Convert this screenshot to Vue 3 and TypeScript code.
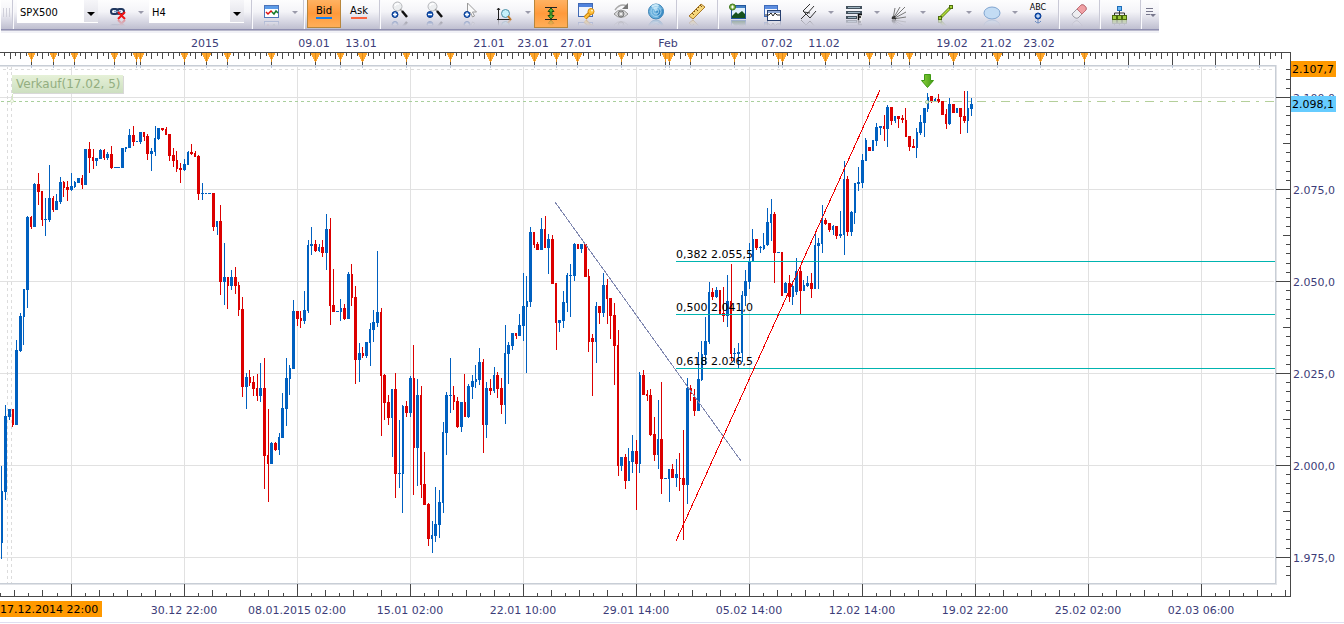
<script setup lang="ts">
import { ref } from 'vue'

type Side = 'C' | 'L' | 'R'
interface Candle {
  up: boolean
  x: number
  high: number
  low: number
  top: number
  bottom: number
  side: Side
}

const symbol = ref('SPX500')
const period = ref('H4')
const priceSide = ref<'Bid' | 'Ask'>('Bid')

// direction+x high low bodyTop bodyBottom [side the body leans to]
const series = `
u1 466 559 491 543 R;u5 405 500 416 492;u9 409 420 409 417;d12 409 427 409 425 R;u16 340 425 350 425
u20 313 352 316 351;u23 289 345 289 317 R;u27 216 308 217 290;d31 216 229 217 227 L;u34 183 227 184 227
d38 173 205 184 192;d42 191 226 191 220 L;u45 198 236 219 220;u49 165 222 198 220;d53 196 212 198 210 L
u56 194 210 201 210;u60 177 204 182 202;d63 181 197 182 188 R;d67 181 201 187 190;u71 173 191 186 190
u74 181 188 182 187 R;u78 178 183 178 183;d82 175 189 178 185 L;u85 149 185 149 185;d89 142 173 149 158
d93 149 169 157 161 L;u96 158 166 158 161;u100 149 159 150 159;d104 149 160 150 158 L;u107 152 160 154 158
d111 146 169 154 168;u115 167 168 167 168;u118 167 168 167 168;u122 148 168 148 168;u125 147 152 147 149 R
u129 129 148 135 148;d133 126 146 135 142;u137 141 142 141 142 L;u140 132 144 132 142;d144 132 141 132 137 L
d147 134 160 136 154;u151 148 171 151 154;u155 126 156 138 152 L;u158 128 140 128 139;d162 128 131 128 130
d166 127 135 129 135 L;d169 134 161 134 156;d173 148 167 155 161;d176 151 172 160 169 R;d180 163 183 168 170
u184 159 171 164 170;u188 151 165 152 165 L;d191 144 155 152 154;d195 151 157 153 157 L;d198 155 200 156 194
u202 183 200 193 194;u206 193 194 193 194 L;u209 193 194 193 194;d213 193 231 193 227;u217 221 235 221 227 L
d220 205 295 221 282;u224 243 305 277 282;d227 277 309 277 286 R;u231 270 290 277 286;d235 267 294 277 286
d238 282 316 285 310 R;d242 297 397 309 387;u246 373 409 377 387;d249 370 386 377 383 R;d253 376 396 382 389
d257 374 401 388 396 L;u260 363 402 388 396;d264 358 489 388 456;d268 409 502 455 464 L;u271 442 464 443 464
d275 442 451 443 450;u279 433 455 437 450 L;u282 393 438 408 438;u286 358 426 378 409;u289 365 395 368 379 R
u293 300 369 311 369;d297 311 326 311 319;d300 311 328 318 321 R;u304 291 324 310 321;u308 240 313 245 311 L
u311 227 255 244 246;d315 240 252 244 251;u319 244 252 247 251 L;d322 240 257 247 253;u326 214 270 229 253
d330 218 325 229 306 L;d333 269 312 305 312;u337 311 312 311 312;u340 299 321 308 312 R;d344 304 320 308 319
u348 272 319 274 319;d351 264 306 274 298 R;d355 286 384 297 360;u359 343 382 353 360;d362 347 358 353 356 R
u366 342 358 342 356;u370 323 366 329 343 L;u373 310 342 322 330;u377 251 327 312 323;d381 308 436 312 376 L
d384 374 420 375 403;d388 395 425 402 418;u392 389 457 389 418 L;d395 373 498 389 474;u399 420 488 473 474
u402 405 513 406 474 R;d406 401 417 406 413;u410 376 417 378 413;d413 345 495 378 448 R;u417 379 486 395 448
d421 386 498 395 485 L;d424 452 505 484 505;d428 503 546 504 539;u432 521 553 535 539 L;u435 487 542 524 536
u439 490 538 502 525;u443 422 513 432 503 L;u446 392 455 395 433;u450 358 413 395 396;d453 386 410 395 402 R
d457 397 428 401 427;u461 402 432 402 427;d464 374 417 402 417 R;u468 384 418 386 417;u472 375 399 381 387
u475 365 388 379 382 R;u479 348 385 362 380;d483 359 453 362 425 L;u486 382 438 388 425;d490 379 395 388 391
u494 367 393 375 391 L;d497 372 398 375 389;d501 378 414 388 405;u505 325 424 353 405 L;u508 342 384 345 354
u512 333 350 333 346;d516 333 339 333 336 L;u519 314 336 325 336;u523 273 341 306 326;u526 276 373 301 307 R
u530 227 307 232 302;d534 232 248 232 245 L;d537 242 250 244 250;u541 218 250 229 250;d545 216 248 229 248 L
u548 234 274 239 248;d552 235 284 239 284;d556 283 350 283 323 L;u559 320 332 320 323;u563 291 328 302 321
u567 273 312 275 303 L;u570 264 317 275 276;u574 243 281 244 276;d577 244 249 244 249 R;u581 244 253 244 249
d585 244 277 244 277;d588 269 352 276 342 R;d592 334 396 338 342;u596 302 363 306 342 L;d599 306 324 306 313
u603 273 317 285 313;d607 279 324 285 299 L;d610 298 339 298 316;d614 303 385 315 346;d618 330 476 345 466 L
u621 457 471 457 466;d625 454 489 457 481;u628 448 481 461 481 R;u632 435 473 451 462;d636 440 510 451 464
u639 372 473 375 464 R;d643 370 395 375 395;d647 390 401 394 396 L;d650 389 436 395 435;d654 417 461 434 455
u658 400 469 439 455 L;d661 382 494 439 479;u665 478 479 478 479;u669 469 502 469 479 L;d672 464 478 469 478
u676 459 487 474 478;d679 453 491 478 479 R;d683 430 540 478 485;u687 378 504 388 485;d690 385 401 388 394 R
d694 389 416 397 411;u698 352 411 379 411;u701 341 381 354 380 R;u705 317 365 341 355;u709 282 344 292 342 L
d712 288 300 292 297;u716 287 298 290 297;d720 290 315 290 314 L;d723 287 322 313 316;u727 275 327 301 316
d731 264 361 301 354 L;u734 348 363 353 354;u738 343 368 352 354;u742 291 362 295 353 L;u745 270 306 281 296
u749 243 289 261 282;u752 229 262 239 261 R;d756 239 250 239 248;u760 246 253 247 248;u763 233 250 245 249 R
u767 208 246 222 245;u771 199 241 214 223 L;d774 212 283 214 253;u778 252 253 252 253;d782 252 296 252 296 L
u785 282 293 283 293;d789 275 302 283 297;u792 281 305 286 297 R;u796 258 295 271 292;d800 265 314 271 291
u803 280 291 285 291 R;u807 276 287 283 286;d811 273 298 283 289;u815 232 289 245 289 L;u818 238 289 243 246
u822 205 253 219 244 L;d825 218 225 220 224;d829 223 232 223 230;u833 225 235 226 230 L;d836 226 239 226 236
u840 211 238 234 236;u844 161 255 179 235 L;d847 176 236 179 232;u851 211 236 212 232;u854 183 224 183 213 R
u858 167 191 182 184;u862 154 188 160 183;u865 138 161 140 161 R;d869 147 151 147 151;u873 140 151 140 151 L
u876 123 146 127 141;u880 126 135 126 128;d884 115 141 126 129 L;u887 105 147 107 129;d891 107 125 107 121
u895 116 123 116 121 L;d898 116 128 116 119;d902 115 123 118 120;d905 108 137 120 137 R;d909 136 151 136 147
d913 139 148 146 148;u916 128 158 132 148 R;u920 115 135 122 133;u924 108 137 108 123;u927 93 112 97 109 R
d931 96 103 96 101;u935 98 102 99 101 L;d938 94 103 99 102;d942 101 115 101 115;d946 109 129 114 124 L
u949 98 125 104 124;d953 104 113 104 113;u957 108 113 108 113 L;d960 108 134 108 117;d964 91 123 116 121
u967 91 133 108 121 R;u971 98 116 104 109`

const candles: Candle[] = series
  .trim()
  .split(/[;\n]/)
  .map((entry) => {
    const [head, high, low, top, bottom, side] = entry.trim().split(' ')
    return {
      up: head[0] === 'u',
      x: Number(head.slice(1)),
      high: Number(high),
      low: Number(low),
      top: Number(top),
      bottom: Number(bottom),
      side: (side ?? 'C') as Side,
    }
  })

function candlePath(up: boolean): string {
  return candles
    .filter((c) => c.up === up)
    .map((c) => {
      const left = c.side === 'R' ? c.x : c.x - 1
      const width = c.side === 'C' ? 3 : 2
      return (
        `M${c.x} ${c.high}h1V${c.low}h-1z` +
        `M${left} ${c.top}h${width}V${c.bottom}h${-width}z`
      )
    })
    .join('')
}
const risingPath = candlePath(true)
const fallingPath = candlePath(false)

const priceRows = [
  { y: 97, label: '2.100,0' },
  { y: 189, label: '2.075,0' },
  { y: 281, label: '2.050,0' },
  { y: 373, label: '2.025,0' },
  { y: 465, label: '2.000,0' },
  { y: 557, label: '1.975,0' },
]
const timeColumns = [
  { x: 71, label: '' },
  { x: 184, label: '30.12 22:00' },
  { x: 297, label: '08.01.2015 02:00' },
  { x: 410, label: '15.01 02:00' },
  { x: 523, label: '22.01 10:00' },
  { x: 636, label: '29.01 14:00' },
  { x: 749, label: '05.02 14:00' },
  { x: 862, label: '12.02 14:00' },
  { x: 975, label: '19.02 22:00' },
  { x: 1088, label: '25.02 02:00' },
  { x: 1201, label: '02.03 06:00' },
]
const dayLabels = [
  { x: 205, label: '2015' },
  { x: 314, label: '09.01' },
  { x: 361, label: '13.01' },
  { x: 489, label: '21.01' },
  { x: 533, label: '23.01' },
  { x: 576, label: '27.01' },
  { x: 668, label: 'Feb' },
  { x: 777, label: '07.02' },
  { x: 824, label: '11.02' },
  { x: 952, label: '19.02' },
  { x: 996, label: '21.02' },
  { x: 1039, label: '23.02' },
]
const markers = [
  31, 53, 74, 114, 136, 140, 184, 206, 227, 271, 315, 340, 362, 406, 450, 490, 534, 556, 577, 621, 665,
  669, 690, 734, 778, 782, 825, 869, 891, 909, 953, 997, 1040, 1084,
]
const largeMarkers = new Set([206, 315, 362, 490, 534, 577, 669, 782, 825, 953, 997, 1040])
const stems = [...markers, 1128, 1172, 1215, 1259]

function markerPath(): string {
  return markers
    .map((x) => {
      const half = largeMarkers.has(x) ? 4 : 3
      let d = ''
      for (let i = 0; i <= half; i++) {
        const y = 53 + i * 2
        d += `M${x - half + i} ${y}h${2 * (half - i) + 1}v2h${-(2 * (half - i) + 1)}z`
      }
      return d
    })
    .join('')
}

function topTicks(): string {
  let d = ''
  const edges = [-12, ...stems, 1302]
  for (let i = 0; i < edges.length - 1; i++) {
    const from = edges[i]
    const span = edges[i + 1] - from
    const count = Math.round(span / 5.45)
    for (let k = 1; k < count; k++) {
      const x = Math.round(from + (span * k) / count)
      if (x >= 0 && x < 1286) d += `M${x} 53h1v${k % 2 ? 3 : 6}h-1z`
    }
  }
  return d
}

function bottomTicks(): string {
  let d = ''
  for (let i = 0; i <= 91; i++) {
    const x = Math.floor(0.5 + i * 14.125)
    if (x > 1288) break
    const tall = (i - 5) % 8 === 0 ? 12 : i % 2 ? 6 : 3
    d += `M${x} ${596 - tall}h1v${tall}h-1z`
  }
  return d
}

function rightTicks(): string {
  let d = ''
  for (let i = -3; i <= 52; i++) {
    const y = Math.round(97 + i * 9.2)
    const len = i % 10 === 0 ? 14 : i % 5 === 0 ? 7 : 4
    d += `M${1290 - len} ${y}h${len}v1h${-len}z`
  }
  return d
}

const markerShape = markerPath()
const axisShape = topTicks() + bottomTicks() + rightTicks()
const stemShape = stems.map((x) => `M${x} 53h1v12h-1z`).join('')
const markerCore = markers.map((x) => `M${x} 53h1v9h-1z`).join('')
const stemTail = stems.map((x) => `M${x} 65h1v3h-1z`).join('')

const fibs = [
  { y: 261, label: '0,382 2.055,5' },
  { y: 314, label: '0,500 2.041,0' },
  { y: 368, label: '0,618 2.026,5' },
]
</script>

<template>
  <main class="terminal">
    <header class="bar">
      <span class="grip"><i></i><i></i><i></i></span>
      <div class="group pickers">
        <span class="picker symbol">
          <select v-model="symbol" aria-label="Symbol"><option>SPX500</option></select>
          <svg viewBox="0 0 14 22"><path d="M3 12h8l-4 4z" /></svg>
        </span>
        <button class="tool" aria-label="Unlink">
          <svg class="icon" viewBox="0 0 20 17">
            <g fill="none" stroke="#20375f" stroke-width="2">
              <rect x="3" y="7" width="7" height="5" rx="2.5" /><rect x="9" y="7" width="7" height="5" rx="2.5" />
            </g>
            <path d="M6 9.500h7" stroke="#7f9cc8" stroke-width="1.500" />
            <path d="M10 10l7 7M17 10l-7 7" stroke="#f01414" stroke-width="2" />
          </svg>
        </button>
        <button class="drop" aria-label="Link options"><i></i></button>
        <span class="picker period">
          <select v-model="period" aria-label="Period"><option>H4</option></select>
          <svg viewBox="0 0 14 22"><path d="M3 12h8l-4 4z" /></svg>
        </span>
      </div>
      <div class="group">
        <button class="tool" aria-label="Chart type">
          <svg class="icon" viewBox="0 0 20 17">
            <rect x="2.500" y="3.500" width="14" height="12" fill="#fff" stroke="#4d74b8" />
            <path d="M3 4h13v3H3z" fill="#5c9be8" />
            <path d="M4 10l2 2 3-3 1 1" fill="none" stroke="#e01010" stroke-width="1.500" />
            <path d="M10 10l2 2 2-3 2 2" fill="none" stroke="#157a25" stroke-width="1.500" />
          </svg>
        </button>
        <button class="drop" aria-label="Chart type options"><i></i></button>
      </div>
      <div class="group">
        <button class="tool side" :class="{ active: priceSide === 'Bid' }" @click="priceSide = 'Bid'">
          Bid<i class="bid"></i>
        </button>
        <button class="tool side" :class="{ active: priceSide === 'Ask' }" @click="priceSide = 'Ask'">
          Ask<i class="ask"></i>
        </button>
      </div>
      <div class="group">
        <button v-for="sign in ['in', 'out']" :key="sign" class="tool" :aria-label="`Zoom ${sign}`">
          <svg class="icon" viewBox="0 0 20 17">
            <circle cx="7.500" cy="4.500" r="4.500" fill="#eceef0" stroke="#b4b6ba" />
            <path d="M5 4a3 3 0 0 1 4-2" fill="none" stroke="#fff" stroke-width="1.500" />
            <path d="M10 7l2 2" stroke="#999" stroke-width="1.500" />
            <path d="M12 9l5 6" stroke="#111" stroke-width="2.500" />
            <circle cx="5" cy="12.500" r="3" fill="#0a4db0" stroke="#08398c" />
            <path :d="sign === 'in' ? 'M3 12.500h4M5 10.500v4' : 'M3 12.500h4'" stroke="#fff" stroke-width="1.500" />
          </svg>
        </button>
        <button class="tool" aria-label="Pointer zoom">
          <svg class="icon" viewBox="0 0 20 17">
            <path d="M7.500 1v12l3-2.500 2 4.500 2-1-2-4h4z" fill="#fafafa" stroke="#999" />
            <circle cx="7" cy="12.500" r="3" fill="#1d63c4" stroke="#08398c" />
            <path d="M5 12.500h4M7 10.500v4" stroke="#fff" stroke-width="1.500" />
          </svg>
        </button>
        <button class="tool" aria-label="Fit zoom">
          <svg class="icon" viewBox="0 0 20 17">
            <path d="M3.500 6v12M2 8l1.500-2L5 8M2 17.500h14" fill="none" stroke="#222" />
            <circle cx="10.500" cy="11.500" r="4" fill="#c4f0fa" stroke="#4b8ea4" />
            <path d="M13 14l3 4" stroke="#c07828" stroke-width="2" />
          </svg>
        </button>
        <button class="drop" aria-label="Zoom options"><i></i></button>
        <button class="tool active" aria-label="Auto scale">
          <svg class="icon" viewBox="0 0 20 17">
            <path d="M4 5.500h12M4 17.500h12" stroke="#222" />
            <path d="M10 6l3 3.500h-2v4h2L10 17l-3-3.500h2v-4H7z" fill="#55b83a" stroke="#174d10" />
          </svg>
        </button>
        <button class="tool" aria-label="Chart settings">
          <svg class="icon" viewBox="0 0 20 17">
            <rect x="2.500" y="1.500" width="14" height="13" fill="#eef3fc" stroke="#4169b4" />
            <path d="M3 2h13v3H3z" fill="#4f82dd" />
            <path d="M9 16l5-5" stroke="#c8800c" stroke-width="4" /><path d="M9 16l5-5" stroke="#ffc23c" stroke-width="2" />
            <circle cx="15" cy="9.500" r="3" fill="#ffc23c" stroke="#d58a10" />
            <circle cx="16" cy="8.500" r="1" fill="#fff3c8" />
          </svg>
        </button>
        <button class="tool" aria-label="Show objects">
          <svg class="icon" viewBox="0 0 20 17">
            <path d="M3 12q7-8 14 0-7 7-14 0z" fill="#dededf" stroke="#929292" />
            <circle cx="10" cy="12" r="3" fill="#b8b8b8" stroke="#777" /><circle cx="10" cy="12" r="1" fill="#fff" />
            <path d="M4 8q5-7 12-4" fill="none" stroke="#aaa" stroke-width="1.500" />
            <path d="M17 1v6h-6z" fill="#777" />
          </svg>
        </button>
        <button class="tool" aria-label="Signals">
          <svg class="icon" viewBox="0 0 20 17">
            <circle cx="10" cy="9.500" r="7.500" fill="#6cb2de" stroke="#387fb2" />
            <path d="M10 9.500L5 4a7 7 0 0 1 8-1z" fill="#c7e8f8" />
            <path d="M10 9.500L17 7a7 7 0 0 1-4 9z" fill="#3c8cc4" />
            <g fill="none" stroke="#a4d2ee">
              <circle cx="10" cy="9.500" r="5" /><circle cx="10" cy="9.500" r="2.500" />
            </g>
          </svg>
        </button>
      </div>
      <div class="group">
        <button class="tool" aria-label="Measure">
          <svg class="icon" viewBox="0 0 20 17">
            <path d="M2 14L14 2l4 3L6 17z" fill="#f6d77b" stroke="#a87828" />
            <path d="M5 11l2 2M7 9l1 1M9 7l2 2M11 5l1 1M13 3l2 2" stroke="#795018" />
          </svg>
        </button>
      </div>
      <div class="group">
        <button class="tool" aria-label="Add picture">
          <svg class="icon" viewBox="0 0 20 17">
            <rect x="3.500" y="3.500" width="14" height="13" fill="#e0f0fc" stroke="#22569c" />
            <path d="M4 4h13v2H4z" fill="#427fc4" />
            <path d="M4 16v-2l4-4 2 2 4-3 3 3v4z" fill="#15521d" />
            <circle cx="4.500" cy="5" r="3" fill="#83b54e" stroke="#3a7418" />
            <path d="M3 5h3M4.500 3.500v3" stroke="#fff" />
          </svg>
        </button>
        <button class="tool" aria-label="New window">
          <svg class="icon" viewBox="0 0 20 17">
            <rect x="1.500" y="3.500" width="13" height="11" fill="#f2f5fc" stroke="#3f6bb8" />
            <path d="M2 4h12v3H2z" fill="#5c8de0" />
            <rect x="4.500" y="8.500" width="13" height="10" fill="#fff" stroke="#263f6e" />
            <path d="M5 9h12v2H5z" fill="#8fa9d6" />
            <path d="M2 13h4l2-2 2 3 2-3 2 2h3" fill="none" stroke="#222" />
          </svg>
        </button>
        <button class="tool" aria-label="Pitchfork">
          <svg class="icon" viewBox="0 0 20 17">
            <path d="M3 17L8 12M5 9l7 7M5 9l7-7M8.500 12.500L16 4M12 16l6-7M6 10l6 1" fill="none" stroke="#333" />
          </svg>
        </button>
        <button class="drop" aria-label="Pitchfork options"><i></i></button>
        <button class="tool" aria-label="Fibonacci">
          <svg class="icon" viewBox="0 0 20 17">
            <path d="M2 5.500h16M2 10.500h16M2 15.500h11" stroke="#44525e" stroke-width="3" />
            <path d="M4 5.500h12M4 10.500h12M4 15.500h8" stroke="#9db2bf" />
            <path d="M13 12h5v6h-5z" fill="#eee" />
            <path d="M14.500 18v-5.500H18M14 15h3" fill="none" stroke="#111" stroke-width="1.500" />
          </svg>
        </button>
        <button class="drop" aria-label="Fibonacci options"><i></i></button>
        <button class="tool" aria-label="Fan">
          <svg class="icon" viewBox="0 0 20 17">
            <path d="M3 17L5 6M3 17L10 5M3 17L15 5M3 17L16 10M3 17l13-2" stroke="#777" />
            <path d="M2 17l3-3M2 15l4 2" stroke="#333" stroke-width="1.500" />
          </svg>
        </button>
        <button class="drop" aria-label="Fan options"><i></i></button>
        <button class="tool" aria-label="Trend line">
          <svg class="icon" viewBox="0 0 20 17">
            <path d="M4 16L15 5" stroke="#5f8418" stroke-width="3" /><path d="M4 16L15 5" stroke="#b4dc3c" stroke-width="1.500" />
            <rect x="2.500" y="14.500" width="3" height="3" fill="#a6d63a" stroke="#4f6e10" />
            <rect x="13.500" y="3.500" width="3" height="3" fill="#a6d63a" stroke="#4f6e10" />
          </svg>
        </button>
        <button class="drop" aria-label="Line options"><i></i></button>
        <button class="tool" aria-label="Ellipse">
          <svg class="icon" viewBox="0 0 20 17">
            <ellipse cx="10" cy="11" rx="8" ry="6" fill="#c3dcf4" stroke="#7fa4cf" />
          </svg>
        </button>
        <button class="drop" aria-label="Shape options"><i></i></button>
        <button class="tool label" aria-label="Add text">
          <span>ABC</span>
          <svg viewBox="0 0 12 12">
            <path d="M6 1v10M3 9q3 4 6 0" fill="none" stroke="#6c8cc0" />
            <circle cx="6" cy="4" r="3" fill="#1d5fc0" stroke="#0a3c92" />
            <path d="M4 4h4M6 2v4" stroke="#fff" />
          </svg>
        </button>
      </div>
      <div class="group">
        <button class="tool" aria-label="Eraser">
          <svg class="icon" viewBox="0 0 20 17">
            <path d="M3 12L12 3q2-1 4 1t1 4l-8 8q-2 1-4-1t-2-3z" fill="#ededf0" stroke="#9a9aa4" />
            <path d="M8 7l4-4q2-1 4 1t1 4l-4 4z" fill="#f0a0a4" stroke="#c27078" />
          </svg>
        </button>
      </div>
      <div class="group">
        <button class="tool" aria-label="Object tree">
          <svg class="icon" viewBox="0 0 20 17">
            <path d="M9.500 8v6M4.500 14v-3h10v3" fill="none" stroke="#333" />
            <rect x="7.500" y="4.500" width="4" height="4" fill="#6cb8f4" stroke="#1d6cb8" />
            <g fill="#9ac83c" stroke="#48680c">
              <rect x="2.500" y="13.500" width="4" height="4" /><rect x="7.500" y="13.500" width="4" height="4" />
              <rect x="12.500" y="13.500" width="4" height="4" />
            </g>
          </svg>
        </button>
      </div>
      <div class="group last">
        <button class="more" aria-label="More tools">
          <svg viewBox="0 0 12 12"><path d="M1 1.500h7M1 4.500h7M1 7.500h4" stroke="#77778c" /><path d="M5 7h6l-3 3z" fill="#77778c" /></svg>
        </button>
      </div>
    </header>

    <svg class="chart" viewBox="0 31 1344 593" role="img" aria-label="SPX500 H4">
      <defs>
        <linearGradient id="order" x1="0" y1="0" x2="0" y2="1">
          <stop offset="0" stop-color="#e6f1d8" /><stop offset="1" stop-color="#cddfc0" />
        </linearGradient>
        <linearGradient id="arrow" x1="0" y1="0" x2="1" y2="0">
          <stop offset="0" stop-color="#8fd03c" /><stop offset="1" stop-color="#3f9a14" />
        </linearGradient>
      </defs>

      <g shape-rendering="crispEdges">
        <g fill="#e1e1e1">
          <rect v-for="row in priceRows" :key="row.y" x="0" :y="row.y" width="1274" height="1" />
          <rect v-for="col in timeColumns" :key="col.x" :x="col.x" y="67" width="1" height="516" />
        </g>
        <path class="guide" d="M3 69.500H1275M7.500 66V583M11.500 66V583" />
        <path d="M0 65h1276v519H0v-1h1275V66H0z" fill="#c8ced6" />
        <path d="M0 66h1275v1H0zM1276 65h1v520H0v-1h1276z" fill="#e2e4e8" />
        <path d="M1 101.500H928" stroke="#a9cf9c" stroke-dasharray="3 3" />

        <path :d="risingPath" fill="#0060c0" />
        <path :d="fallingPath" fill="#dc0000" />

        <path d="M929 101.500H1275" stroke="#b4cf9a" stroke-dasharray="9 6 3 6" />
        <rect v-for="fib in fibs" :key="fib.y" x="676" :y="fib.y" width="599" height="1" fill="#00b4b0" />
        <path d="M555 202L741 461" fill="none" stroke="#8088b0" />
        <path d="M676 541L880 90" fill="none" stroke="#f00000" />

        <path d="M0 52h1291v545H0v-1h1290V53H0z" fill="#484848" />
        <path :d="axisShape" fill="#484848" />
        <path :d="markerShape" fill="#ffa62b" />
        <path :d="stemShape" fill="#484848" />
        <path :d="markerCore" fill="#df8c18" />
        <path :d="stemTail" fill="#b8c4d8" />
        <rect x="0" y="622" width="1344" height="1" fill="#dfdff0" />
      </g>

      <g>
        <path d="M12.500 94v5" stroke="#d5e8c2" />
        <circle cx="12" cy="101" r="1.500" fill="#fff" stroke="#d5e8c2" />
        <rect x="13" y="76" width="111" height="18" fill="#d8d8d8" />
        <rect x="12" y="75" width="111" height="18" fill="url(#order)" />
        <text x="16" y="88" class="order">Verkauf(17.02, 5)</text>
        <path d="M924.500 74.500h6v6h3l-6 7-6-7h3z" fill="url(#arrow)" stroke="#3f9a14" />
        <circle cx="927" cy="102" r="1.500" fill="#fff" stroke="#9cc48c" />
      </g>

      <g class="axis">
        <text v-for="day in dayLabels" :key="day.x" :x="day.x" y="47" text-anchor="middle">{{ day.label }}</text>
        <text v-for="col in timeColumns" :key="col.x" :x="col.x" y="614" text-anchor="middle">{{ col.label }}</text>
        <text v-for="row in priceRows" :key="row.y" x="1293" :y="row.y + 5">{{ row.label }}</text>
      </g>
      <g class="ink">
        <text v-for="fib in fibs" :key="fib.y" x="676" :y="fib.y - 3">{{ fib.label }}</text>
        <rect x="0" y="601" width="102" height="16" fill="#ff9900" />
        <text x="0" y="613">17.12.2014 22:00</text>
        <rect x="1291" y="61" width="45" height="16" fill="#ff9900" />
        <text x="1292" y="73">2.107,7</text>
        <rect x="1291" y="96" width="45" height="16" fill="#66ccff" />
        <text x="1292" y="108">2.098,1</text>
      </g>
    </svg>
  </main>
</template>

<style>
body {
  background: #fff;
}
</style>

<style scoped>
.terminal {
  overflow: hidden;
  background: #fff;
  font-family: "DejaVu Sans", Verdana, sans-serif;
}
.bar {
  display: flex;
  width: max-content;
  height: 29px;
  margin-left: 1px;
  border-bottom: 1px solid #8f8fb0;
  box-shadow: 0 1px 0 #b9b9cc, 0 3px 0 #f1f1f6;
  background: linear-gradient(#fdfdfe 0, #f4f4f8 40%, #dedee8 65%, #bfbfd0 100%);
}
.grip {
  display: flex;
  gap: 1px;
  width: 11px;
  padding: 8px 0 0 2px;
  box-sizing: border-box;
}
.grip i {
  width: 1px;
  height: 9px;
  margin-right: 1px;
  background: #d0d0da;
}
.group {
  display: flex;
  gap: 1px;
  padding: 0 3px 0 2px;
  border-left: 1px solid #c9c9d6;
  box-shadow: inset 1px 0 0 #fafafd;
}
.group.pickers {
  gap: 3px;
  padding: 0 7px 0 4px;
}
.group + .group {
  padding-left: 3px;
}
.group.last {
  padding: 0;
}
button {
  display: flex;
  padding: 0;
  border: 0;
  background: none;
  font: inherit;
}
.tool {
  width: 34px;
  height: 28px;
  padding-top: 2px;
  box-sizing: border-box;
  justify-content: center;
  align-items: flex-start;
}
.tool.active {
  border: 1px solid #b8863c;
  border-top: 0;
  background: linear-gradient(#ffb262, #ff9a3c 50%, #ffae58);
}
.icon {
  width: 20px;
  height: 17px;
  overflow: visible;
  -webkit-box-reflect: below 1px linear-gradient(transparent 65%, rgba(0, 0, 0, 0.35));
}
.side {
  flex-direction: column;
  align-items: center;
  justify-content: flex-start;
  padding-top: 5px;
  font-size: 10px;
  line-height: 12px;
  color: #000;
}
.side i {
  width: 16px;
  height: 2px;
}
.bid {
  background: #1080f0;
}
.ask {
  background: #fa6440;
}
.drop {
  width: 10px;
  height: 28px;
  padding: 11px 0 0 2px;
}
.pickers .drop {
  width: 8px;
  padding-left: 0;
}
.drop i {
  border: 3px solid transparent;
  border-top-color: #9a9aaa;
  border-bottom: 0;
}
.picker {
  display: grid;
  height: 23px;
  background: #fff;
}
.picker.symbol {
  width: 81px;
}
.picker.period {
  width: 95px;
}
.picker > * {
  grid-area: 1 / 1;
}
.picker select {
  appearance: none;
  border: 0;
  border-radius: 0;
  margin: 0;
  padding: 1px 16px 0 3px;
  background: transparent;
  font: 11px "DejaVu Sans Condensed", "DejaVu Sans", sans-serif;
  color: #000;
}
.picker svg {
  justify-self: end;
  width: 14px;
  height: 22px;
  background: linear-gradient(#f6f6f9, #dedee6);
  pointer-events: none;
}
.tool.label {
  flex-direction: column;
  align-items: center;
  justify-content: flex-start;
  padding-top: 4px;
  font-size: 8px;
  line-height: 8px;
  color: #000;
}
.tool.label svg {
  width: 12px;
  height: 12px;
}
.more {
  width: 18px;
  height: 28px;
  padding: 7px 0 0 4px;
}
.more svg {
  width: 12px;
  height: 12px;
}
.chart {
  display: block;
  width: 100%;
  height: auto;
  margin-top: 1px;
}
.chart text {
  font-size: 11px;
}
.chart .order {
  font-size: 12px;
  fill: #93ae80;
}
.axis text {
  fill: #3c3c78;
}
.ink text {
  fill: #000;
}
.guide {
  fill: none;
  stroke: #dcdcdc;
  stroke-dasharray: 3 3;
}
</style>
